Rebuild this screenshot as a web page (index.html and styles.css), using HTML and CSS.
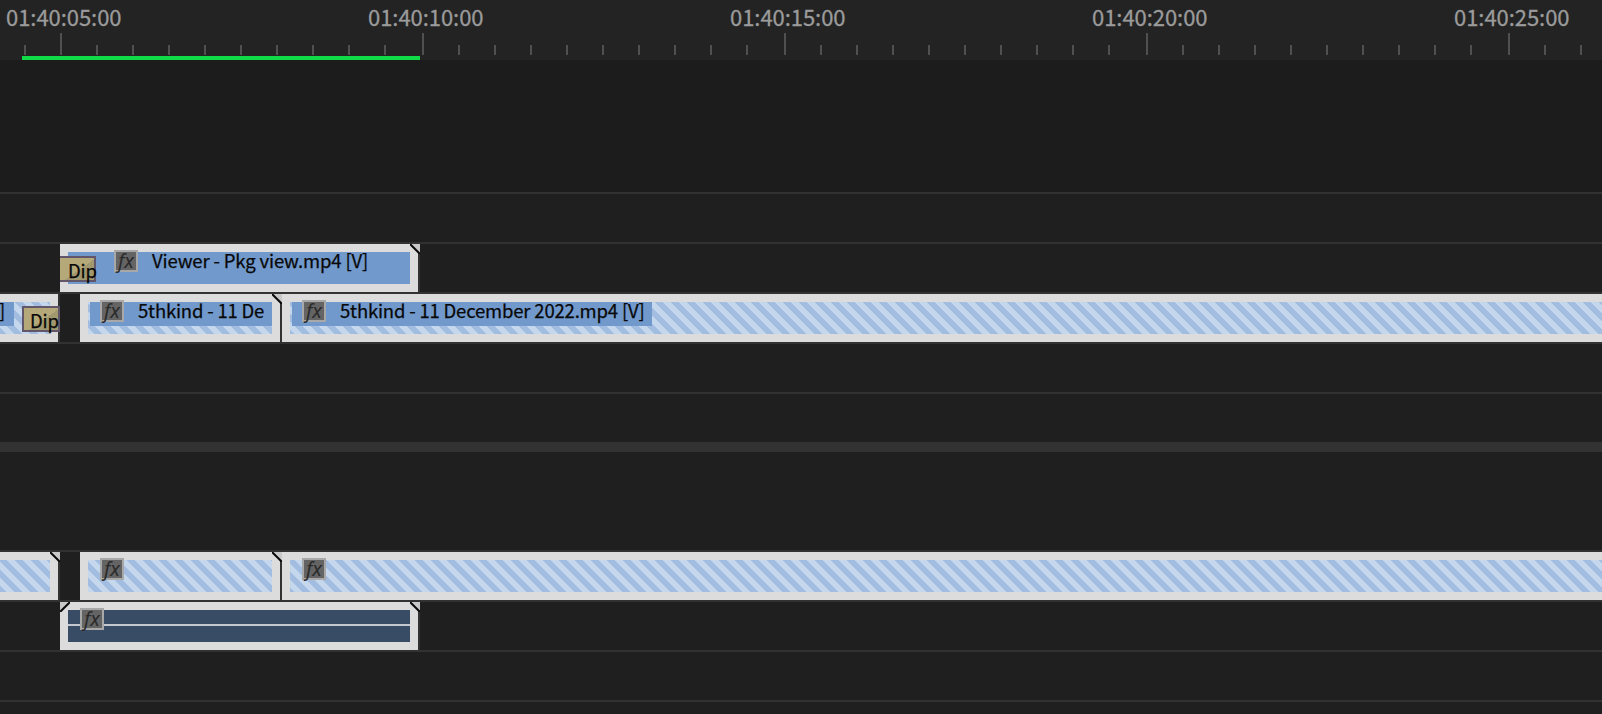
FILE: index.html
```
<!DOCTYPE html>
<html lang="en">
<head>
<meta charset="UTF-8">
<meta name="viewport" content="width=device-width, initial-scale=1.0">
<title>Timeline</title>
<link rel="stylesheet" href="styles.css">
</head>
<body>
<div class="timeline">

  <!-- Time ruler -->
  <div class="ruler">
    <div class="lead"></div>
    <div class="interval"><span class="time">01:40:05:00</span><div class="ticks"></div></div>
    <div class="interval"><span class="time">01:40:10:00</span><div class="ticks"></div></div>
    <div class="interval"><span class="time">01:40:15:00</span><div class="ticks"></div></div>
    <div class="interval"><span class="time">01:40:20:00</span><div class="ticks"></div></div>
    <div class="interval"><span class="time">01:40:25:00</span><div class="ticks"></div></div>
    <div class="render-bar"></div>
  </div>

  <!-- Video tracks -->
  <div class="spacer video-space"></div>
  <div class="track"></div>
  <div class="track">
    <div class="clip clip-viewer">
      <div class="media solid">
        <div class="label"><span class="fx">fx</span><span class="name name-viewer">Viewer - Pkg view.mp4 [V]</span></div>
      </div>
      <div class="transition dip-in">Dip</div>
      <svg class="corner right" viewBox="0 0 10 10"><path class="fold" d="M0 0H10V10Z"/><path class="edge" d="M0 0L10 10"/></svg>
    </div>
  </div>
  <div class="track video">
    <div class="clip clip-before">
      <div class="media striped">
        <div class="label label-end"><span class="name">]</span></div>
      </div>
      <div class="transition dip-out">Dip</div>
    </div>
    <div class="clip clip-short">
      <div class="media striped">
        <div class="label"><span class="fx">fx</span><span class="name">5thkind - 11 De</span></div>
      </div>
      <svg class="corner right" viewBox="0 0 10 10"><path class="fold" d="M0 0H10V10Z"/><path class="edge" d="M0 0L10 10"/></svg>
    </div>
    <div class="clip clip-long">
      <div class="media striped">
        <div class="label label-long"><span class="fx">fx</span><span class="name">5thkind - 11 December 2022.mp4 [V]</span></div>
      </div>
    </div>
  </div>
  <div class="track"></div>
  <div class="track last"></div>

  <div class="splitter"></div>

  <!-- Audio tracks -->
  <div class="spacer audio-space"></div>
  <div class="track audio">
    <div class="clip clip-before">
      <div class="media striped"></div>
      <svg class="corner right" viewBox="0 0 10 10"><path class="fold" d="M0 0H10V10Z"/><path class="edge" d="M0 0L10 10"/></svg>
    </div>
    <div class="clip clip-short">
      <div class="media striped"><div class="label"><span class="fx">fx</span></div></div>
      <svg class="corner right" viewBox="0 0 10 10"><path class="fold" d="M0 0H10V10Z"/><path class="edge" d="M0 0L10 10"/></svg>
    </div>
    <div class="clip clip-long">
      <div class="media striped"><div class="label"><span class="fx">fx</span></div></div>
    </div>
  </div>
  <div class="track">
    <div class="clip clip-viewer">
      <div class="media wave"><div class="label"><span class="fx">fx</span></div></div>
      <svg class="corner left" viewBox="0 0 10 10"><path class="fold" d="M0 0H10L0 10Z"/><path class="edge" d="M10 0L0 10"/></svg>
      <svg class="corner right" viewBox="0 0 10 10"><path class="fold" d="M0 0H10V10Z"/><path class="edge" d="M0 0L10 10"/></svg>
    </div>
  </div>
  <div class="track"></div>
  <div class="track last"></div>

</div>
</body>
</html>
```
FILE: styles.css
```
* {
  box-sizing: border-box;
}
body {
  margin: 0;
  background: #1f1f1f;
  font-family: 'Noto Sans CJK SC', 'Noto Sans', sans-serif;
  overflow: hidden;
}
.timeline {
  height: 714px;
  overflow: hidden;
}

/* Ruler */
.ruler {
  position: relative;
  display: flex;
  height: 60px;
  background: #232323;
  overflow: hidden;
}
.lead {
  flex: none;
  width: 36px;
  height: 10px;
  margin: 45px 0 0 24px;
  border-left: 2px solid #505050;
}
.interval {
  flex: none;
  width: 362px;
}
.time {
  display: block;
  height: 33px;
  margin-left: -54px;
  color: #9b9b9b;
  font-size: 22px;
  line-height: 32px;
  letter-spacing: -0.05px;
  -webkit-text-stroke: 0.3px #9b9b9b;
  white-space: nowrap;
}
.ticks {
  height: 22px;
  padding: 12px 0 0 34px;
  border-left: 2px solid #505050;
}
.ticks::before {
  content: "";
  display: block;
  width: 290px;
  height: 10px;
  background: repeating-linear-gradient(90deg, #505050 0 2px, transparent 2px 36px);
}
.render-bar {
  position: absolute;
  left: 22px;
  bottom: 0;
  width: 398px;
  height: 4px;
  background: #0fdc46;
}

/* Tracks */
.spacer {
  border-bottom: 2px solid #323232;
}
.video-space {
  height: 134px;
  background: #1c1c1c;
}
.audio-space {
  height: 100px;
}
.track {
  display: flex;
  height: 50px;
  border-bottom: 2px solid #323232;
}
.track.last {
  height: 48px;
  border-bottom: none;
}
.splitter {
  height: 10px;
  background: #323232;
}

/* Clips */
.clip {
  position: relative;
  flex: none;
  height: 48px;
  padding: 8px;
  background: #dcdcdc;
  border-right: 2px solid #323232;
}
.clip-viewer {
  width: 360px;
  margin-left: 60px;
}
.clip-before {
  width: 60px;
  padding-left: 0;
}
.clip-short {
  width: 202px;
  margin-left: 20px;
}
.clip-long {
  width: 1400px;
}
.clip-short + .clip-long {
  margin-left: 0;
}
.media {
  height: 32px;
}
.solid {
  background: #7199cc;
}
.striped {
  background-color: #c5d7ec;
  background-image: linear-gradient(45deg, #a3bde0 25%, #c5d7ec 25% 50%, #a3bde0 50% 75%, #c5d7ec 75%);
  background-size: 16px 16px;
  background-attachment: fixed;
  background-position: -2px 0;
}
.video .striped {
  background-position: -2px -2px;
}
.wave {
  background: linear-gradient(#394c65 14px, #c3c8d0 14px 16px, #394c65 16px);
}
.label {
  display: flex;
  height: 24px;
  padding-left: 12px;
}
.clip-viewer .label {
  padding-left: 46px;
}
.clip-viewer .wave .label {
  padding-left: 12px;
}
.video .label {
  margin-left: 2px;
  padding-left: 10px;
  background: #7199cc;
}
.video .label-long {
  width: 360px;
}
.video .label-end {
  width: 14px;
  margin-left: 0;
  padding-left: 0;
}
.label-end .name {
  margin-left: -1px;
}
.fx {
  flex: none;
  width: 24px;
  height: 22px;
  margin: -2px 14px 0 0;
  background: #646464;
  border: 2px solid #a8a8a8;
  color: #2a2a2a;
  font: italic 20px/17px 'Noto Sans', sans-serif;
  text-align: center;
}
.name {
  color: #080808;
  font-size: 18.5px;
  line-height: 17px;
  letter-spacing: -0.18px;
  -webkit-text-stroke: 0.25px #080808;
  white-space: nowrap;
}
.name-viewer {
  letter-spacing: -0.14px;
}
.transition {
  position: absolute;
  height: 26px;
  border: 2px solid #62566b;
  background: linear-gradient(145deg, #b5a97a 55%, #a19870 55%);
  color: #080808;
  font-size: 18.5px;
  line-height: 25px;
  letter-spacing: -0.2px;
  -webkit-text-stroke: 0.25px #080808;
}
.dip-in {
  top: 12px;
  left: 0;
  width: 36px;
  padding-left: 8px;
  border-left: none;
}
.dip-out {
  top: 12px;
  left: 22px;
  width: 38px;
  padding-left: 6px;
}
.corner {
  position: absolute;
  top: 0;
  width: 10px;
  height: 10px;
}
.corner.right {
  right: -2px;
}
.corner.left {
  left: 0;
}
.fold {
  fill: #c8c8c8;
}
.edge {
  fill: none;
  stroke: #080808;
  stroke-width: 2;
}
```
